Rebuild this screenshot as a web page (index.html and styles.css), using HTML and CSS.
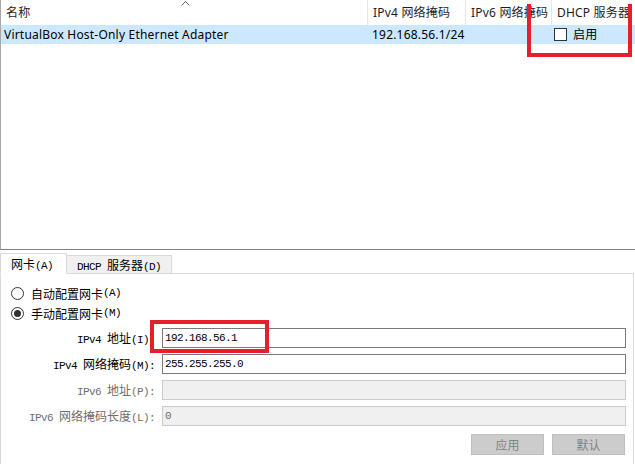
FILE: index.html
```html
<!DOCTYPE html>
<html>
<head>
<meta charset="utf-8">
<link rel="stylesheet" href="styles.css">
</head>
<body>
<div class="app">
  <div class="list">
    <div class="hdr">
      <div class="hc c1">名称<svg class="sort" width="9" height="5" viewBox="0 0 9 5"><polyline points="0.5,4.5 4.5,0.5 8.5,4.5" fill="none" stroke="#666" stroke-width="1"/></svg></div>
      <div class="hc c2">IPv4 网络掩码</div>
      <div class="hc c3">IPv6 网络掩码</div>
      <div class="hc c4">DHCP 服务器</div>
    </div>
    <div class="row sel">
      <div class="rc c1">VirtualBox Host-Only Ethernet Adapter</div>
      <div class="rc c2">192.168.56.1/24</div>
      <div class="rc c3"></div>
      <div class="rc c4"><span class="chk"></span>启用</div>
    </div>
  </div>
  <div class="tabs">
    <div class="tab active">网卡<span class="m">(A)</span></div>
    <div class="tab"><span class="m">DHCP </span>服务器<span class="m">(D)</span></div>
  </div>
  <div class="panel">
    <div class="radio"><span class="rb"></span>自动配置网卡<span class="m">(A)</span></div>
    <div class="radio"><span class="rb on"></span>手动配置网卡<span class="m">(M)</span></div>
    <div class="form">
      <div class="lbl"><span class="m">IPv4 </span>地址<span class="m">(I):</span></div>
      <div class="inp"><span class="m">192.168.56.1</span></div>
      <div class="lbl"><span class="m">IPv4 </span>网络掩码<span class="m">(M):</span></div>
      <div class="inp"><span class="m">255.255.255.0</span></div>
      <div class="lbl dis"><span class="m">IPv6 </span>地址<span class="m">(P):</span></div>
      <div class="inp dis"></div>
      <div class="lbl dis"><span class="m">IPv6 </span>网络掩码长度<span class="m">(L):</span></div>
      <div class="inp dis"><span class="m">0</span></div>
    </div>
    <div class="btns">
      <div class="btn">应用</div>
      <div class="btn">默认</div>
    </div>
  </div>
  <div class="mark mark1"></div>
  <div class="mark mark2"></div>
</div>
</body>
</html>
```

FILE: styles.css
```css
html, body {
  margin: 0;
  padding: 0;
  background: #ffffff;
}
.app {
  position: relative;
  width: 635px;
  height: 464px;
  overflow: hidden;
  background: #ffffff;
}
.list {
  height: 250px;
  border-left: 1px solid #a8a8a8;
  border-bottom: 1px solid #828282;
  box-sizing: border-box;
  font-family: "Noto Sans", "Noto Sans CJK SC", sans-serif;
  font-size: 12px;
  letter-spacing: 0.2px;
  color: #000;
}
.hdr {
  display: flex;
  height: 25px;
}
.hc {
  position: relative;
  box-sizing: border-box;
  padding-left: 5px;
  line-height: 25px;
  color: #1e1e1e;
  border-right: 1px solid #e5e5e5;
  white-space: nowrap;
  overflow: hidden;
}
.c1 { width: 367px; }
.c2 { width: 98px; }
.c3 { width: 86px; }
.c4 { flex: 1; border-right: none; }
.sort {
  position: absolute;
  left: 180px;
  top: 1px;
}
.row {
  display: flex;
  height: 19px;
}
.row.sel { background: #cce8ff; }
.rc {
  box-sizing: border-box;
  padding-left: 4px;
  line-height: 19px;
  white-space: nowrap;
  overflow: hidden;
}
.row .c1 { padding-left: 3px; }
.row .c4 {
  display: flex;
  align-items: center;
  padding-left: 2px;
}
.chk {
  display: inline-block;
  width: 11px;
  height: 11px;
  border: 1px solid #333;
  background: #fff;
  margin-right: 6px;
}
.m {
  font-family: "Liberation Mono", monospace;
  font-size: 11px;
  letter-spacing: -0.6px;
}
.tabs {
  display: flex;
  align-items: flex-end;
  height: 23px;
  font-family: "Noto Sans CJK SC", sans-serif;
  font-size: 12px;
  position: relative;
  z-index: 1;
}
.tab {
  box-sizing: border-box;
  height: 18px;
  line-height: 17px;
  padding: 0 8px;
  border: 1px solid #d9d9d9;
  border-bottom: none;
  background: #f0f0f0;
  white-space: nowrap;
}
.tab.active {
  height: 21px;
  width: 67px;
  line-height: 20px;
  background: #fff;
  border-bottom: 1px solid #fff;
  margin-bottom: -1px;
  padding-left: 10px;
}
.tab + .tab {
  width: 105px;
  border-left: none;
  padding-left: 10px;
}
.panel {
  height: 200px;
  border: 1px solid #d9d9d9;
  box-sizing: border-box;
  width: 634px;
  font-family: "Noto Sans CJK SC", sans-serif;
  font-size: 12px;
  padding: 9px 0 0 10px;
}
.radio {
  display: flex;
  align-items: center;
  height: 20px;
}
.rb {
  box-sizing: border-box;
  width: 13px;
  height: 13px;
  border: 1px solid #333;
  border-radius: 50%;
  margin-right: 7px;
  position: relative;
}
.rb.on::after {
  content: "";
  position: absolute;
  left: 2px;
  top: 2px;
  width: 7px;
  height: 7px;
  border-radius: 50%;
  background: #333;
}
.form {
  display: grid;
  grid-template-columns: 144px 464px;
  grid-auto-rows: 20px;
  column-gap: 7px;
  row-gap: 6px;
  margin-top: 5px;
}
.lbl {
  height: 20px;
  line-height: 20px;
  text-align: right;
  white-space: nowrap;
  overflow: visible;
}
.lbl.dis { color: #6d6d6d; }
.inp {
  box-sizing: border-box;
  height: 20px;
  border: 1px solid #7a7a7a;
  display: flex;
  align-items: center;
  padding-left: 2px;
  background: #fff;
}
.inp.dis {
  border-color: #cccccc;
  background: #f0f0f0;
  color: #6d6d6d;
}
.btns {
  display: flex;
  justify-content: flex-end;
  gap: 8px;
  margin-top: 8px;
  width: 614px;
}
.btn {
  box-sizing: border-box;
  width: 73px;
  height: 21px;
  background: #cccccc;
  border: 1px solid #bfbfbf;
  color: #838383;
  text-align: center;
  line-height: 19px;
}
.mark {
  position: absolute;
  border: 4px solid #e3202c;
  box-sizing: border-box;
}
.mark1 {
  left: 527px;
  top: 4px;
  width: 105px;
  height: 53px;
  border-top: none;
}
.mark2 {
  left: 150px;
  top: 320px;
  width: 119px;
  height: 33px;
}
```
